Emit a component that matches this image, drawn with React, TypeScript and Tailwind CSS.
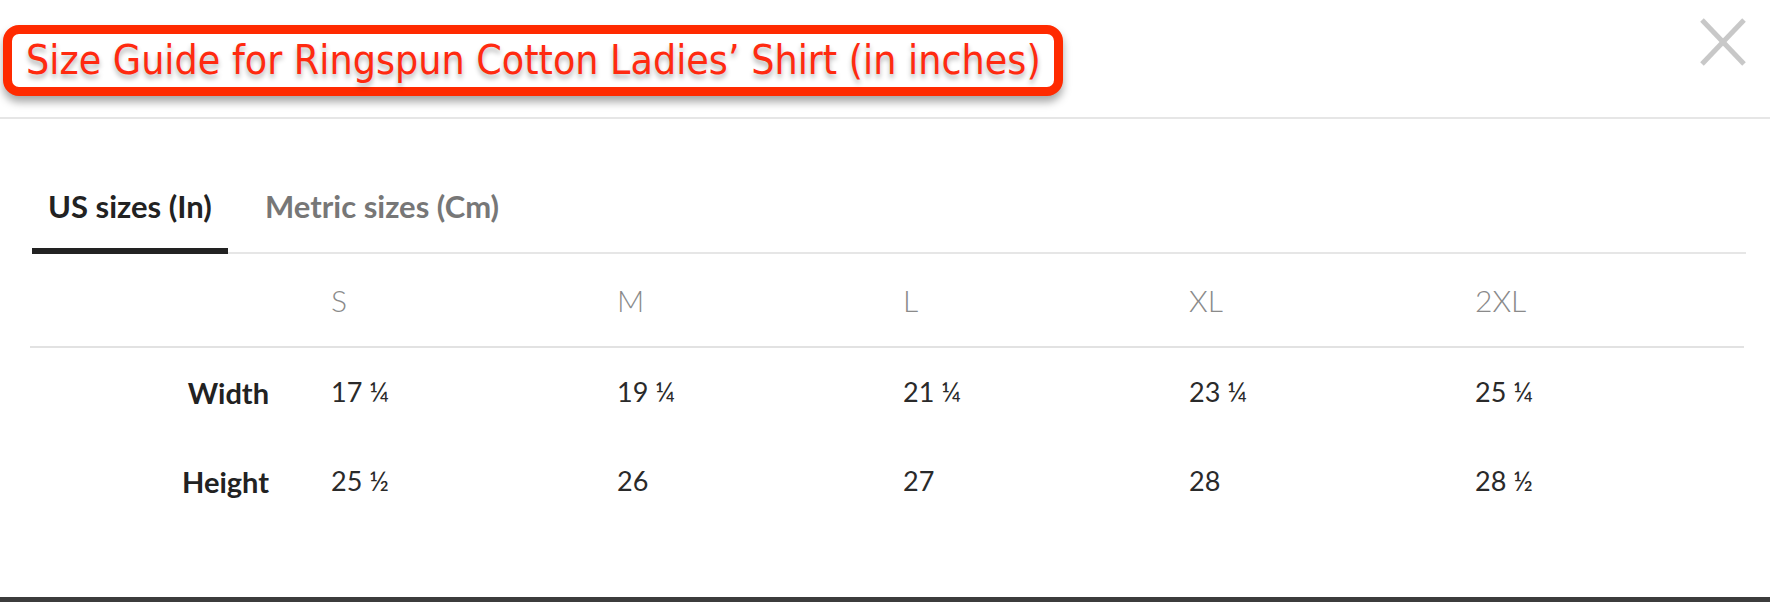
import React from "react";

const sizes = ["S", "M", "L", "XL", "2XL"];
const rows = [
  { label: "Width", values: ["17 ¼", "19 ¼", "21 ¼", "23 ¼", "25 ¼"] },
  { label: "Height", values: ["25 ½", "26", "27", "28", "28 ½"] },
];

export default function App() {
  return (
    <div className="relative w-[1770px] h-[602px] bg-white overflow-hidden font-['Lato','Open_Sans',sans-serif]">
      {/* header */}
      <div className="flex h-[119px] items-start justify-between border-b-2 border-[#e6e6e6]">
        <div className="ml-[3px] mt-[25px] flex h-[71px] w-[1060px] items-center rounded-[16px] border-[9px] border-[#ff2a00] bg-white pl-[14px] shadow-[0_6px_8px_rgba(0,0,0,0.35)]">
          <span className="whitespace-nowrap font-['DejaVu_Sans_Condensed','Liberation_Sans',sans-serif] text-[40.7px] leading-none text-[#ff2a10] [text-shadow:0_4px_5px_rgba(0,0,0,0.3)]">
            Size Guide for Ringspun Cotton Ladies’ Shirt (in inches)
          </span>
        </div>
        <button className="mr-[24px] mt-[18px] h-[48px] w-[46px]" aria-label="close">
          <svg width="46" height="48" viewBox="0 0 46 48">
            <line x1="2" y1="2" x2="44" y2="46" stroke="#c8c8c8" strokeWidth="5" />
            <line x1="44" y1="2" x2="2" y2="46" stroke="#c8c8c8" strokeWidth="5" />
          </svg>
        </button>
      </div>

      {/* tabs */}
      <div className="ml-[32px] mt-[70px] flex w-[1714px] border-b-2 border-[#e6e6e6]">
        <div className="-mb-[2px] w-[196px] border-b-[6px] border-[#222] pb-[25px] pl-[16px] text-[31px] font-bold leading-[34px] text-[#222]">
          US sizes (In)
        </div>
        <div className="pl-[37px] text-[31px] font-bold leading-[34px] text-[#777]">
          Metric sizes (Cm)
        </div>
      </div>

      {/* table */}
      <div className="ml-[30px] w-[1714px]">
        <div className="grid h-[94px] grid-cols-[301px_286px_286px_286px_286px_1fr] items-center border-b-2 border-[#e2e2e2]">
          <div />
          {sizes.map((s) => (
            <div key={s} className="text-[30px] font-light text-[#8a8a8a]">
              {s}
            </div>
          ))}
        </div>
        {rows.map((r) => (
          <div
            key={r.label}
            className="grid h-[89px] grid-cols-[301px_286px_286px_286px_286px_1fr] items-center"
          >
            <div className="pr-[62px] text-right text-[29px] font-bold text-[#222]">{r.label}</div>
            {r.values.map((v, i) => (
              <div key={i} className="text-[27px] text-[#2a2a2a]">
                {v}
              </div>
            ))}
          </div>
        ))}
      </div>

      {/* bottom strip */}
      <div className="absolute bottom-0 left-0 h-[5px] w-full bg-[#3c3c3c]" />
    </div>
  );
}
